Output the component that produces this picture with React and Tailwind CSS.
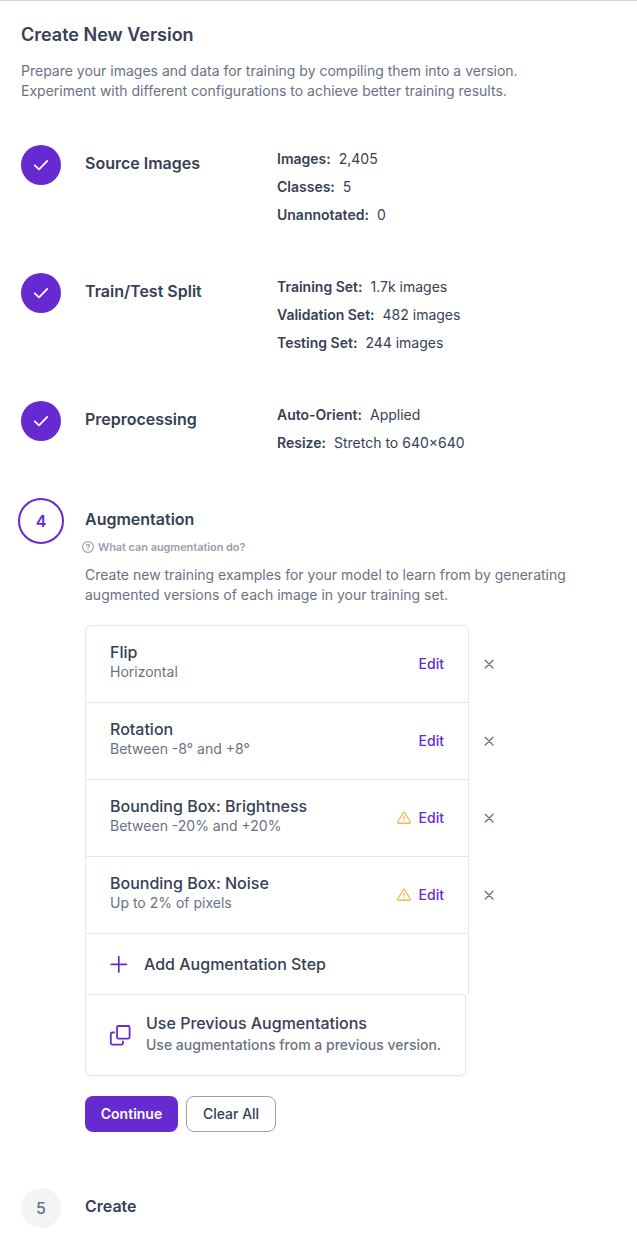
import clsx from 'clsx';

const doneSteps = [
  {
    title: 'Source Images',
    details: [
      ['Images:', '2,405'],
      ['Classes:', '5'],
      ['Unannotated:', '0'],
    ],
  },
  {
    title: 'Train/Test Split',
    details: [
      ['Training Set:', '1.7k images'],
      ['Validation Set:', '482 images'],
      ['Testing Set:', '244 images'],
    ],
  },
  {
    title: 'Preprocessing',
    details: [
      ['Auto-Orient:', 'Applied'],
      ['Resize:', 'Stretch to 640×640'],
    ],
  },
];

const augmentations = [
  { name: 'Flip', summary: 'Horizontal' },
  { name: 'Rotation', summary: 'Between -8° and +8°' },
  { name: 'Bounding Box: Brightness', summary: 'Between -20% and +20%', warning: true },
  { name: 'Bounding Box: Noise', summary: 'Up to 2% of pixels', warning: true },
];

function CheckIcon() {
  return (
    <svg className="w-4 h-4" viewBox="0 0 16 16" fill="none" stroke="currentColor" strokeWidth="1.8" strokeLinecap="round" strokeLinejoin="round">
      <path d="M1.8 8.3 6 12.3 14.3 3.9" />
    </svg>
  );
}

function WarningIcon() {
  return (
    <svg className="w-[14px] h-[14px]" viewBox="0 0 14 14" fill="none" stroke="currentColor" strokeWidth="1.4" strokeLinecap="round" strokeLinejoin="round">
      <path d="M6.3 1.5a.8.8 0 0 1 1.4 0l5.5 9.5a.8.8 0 0 1-.7 1.2h-11a.8.8 0 0 1-.7-1.2z" />
      <path d="M7 5v2.8" />
      <path d="M7 9.8v.1" />
    </svg>
  );
}

function CloseIcon() {
  return (
    <svg className="w-[10px] h-[10px]" viewBox="0 0 10 10" fill="none" stroke="currentColor" strokeWidth="1.3" strokeLinecap="round">
      <path d="M1.2 1.2l7.8 7.8M9 1.2l-7.8 7.8" />
    </svg>
  );
}

function QuestionIcon() {
  return (
    <svg className="w-3 h-3" viewBox="0 0 12 12" fill="none" stroke="currentColor" strokeWidth="1.2" strokeLinecap="round" strokeLinejoin="round">
      <circle cx="6" cy="6" r="5.4" />
      <path d="M4.5 4.6c0-.7.6-1.2 1.5-1.2s1.6.5 1.6 1.2c0 .9-1.6 1-1.6 2" />
      <path d="M6 8.5v.1" />
    </svg>
  );
}

function PlusIcon() {
  return (
    <svg className="w-[18px] h-[18px]" viewBox="0 0 18 18" fill="none" stroke="currentColor" strokeWidth="1.7" strokeLinecap="round">
      <path d="M8.8 1.7v15.2M1.2 9.3h15.2" />
    </svg>
  );
}

function CloneIcon() {
  return (
    <svg className="w-[22px] h-[22px]" viewBox="0 0 22 22" fill="none" stroke="currentColor" strokeWidth="1.8" strokeLinecap="round" strokeLinejoin="round">
      <rect x="8" y="2" width="12.6" height="12.6" rx="1.5" />
      <path d="M5 8.5H3.3A1.5 1.5 0 0 0 1.8 10v9.1a1.5 1.5 0 0 0 1.5 1.5h9.2a1.5 1.5 0 0 0 1.5-1.5v-1.7" />
    </svg>
  );
}

function DoneStep({ title, details }) {
  return (
    <section className="flex pb-11">
      <div className="w-10 h-10 mr-6 rounded-full bg-[#652bd1] text-white flex items-center justify-center">
        <CheckIcon />
      </div>
      <h3 className="w-48 pt-1.5 text-base font-semibold">{title}</h3>
      <dl className="text-sm leading-7">
        {details.map(([label, value]) => (
          <div key={label} className="flex gap-2">
            <dt className="font-semibold">{label}</dt>
            <dd>{value}</dd>
          </div>
        ))}
      </dl>
    </section>
  );
}

function AugmentationRow({ name, summary, warning, first }) {
  return (
    <li className="flex items-center">
      <div
        className={clsx(
          'flex items-center w-96 h-[77px] px-6 border-x border-t border-gray-200',
          first && 'rounded-t-md'
        )}
      >
        <div className="flex-1 pb-1">
          <p className="text-base leading-5 font-medium">{name}</p>
          <p className="text-sm text-gray-500">{summary}</p>
        </div>
        {warning && (
          <span className="mr-2 text-[#f0b95b]">
            <WarningIcon />
          </span>
        )}
        <button className="text-sm font-medium text-[#652bd1]">Edit</button>
      </div>
      <button className="ml-[15px] text-gray-500">
        <CloseIcon />
      </button>
    </li>
  );
}

export default function App() {
  return (
    <main className="h-[1236px] overflow-hidden bg-white border-t border-gray-300 px-[21px] pt-5 font-['Inter',sans-serif] text-gray-700">
      <h2 className="text-lg leading-7 font-semibold">Create New Version</h2>
      <p className="mt-3 mb-11 text-sm text-gray-500">
        Prepare your images and data for training by compiling them into a version.
        <br />
        Experiment with different configurations to achieve better training results.
      </p>

      {doneSteps.map((step) => (
        <DoneStep key={step.title} {...step} />
      ))}

      <section className="flex">
        <div className="w-[46px] h-[46px] -mt-[3px] -ml-[3px] mr-[21px] shrink-0 rounded-full border-2 border-[#652bd1] text-[#652bd1] font-semibold flex items-center justify-center">
          4
        </div>
        <div className="pt-1.5">
          <h3 className="text-base font-semibold">Augmentation</h3>
          <a className="flex items-center gap-1 h-4 mt-2 -ml-[3px] text-[11px] font-semibold tracking-[-0.07px] text-gray-400">
            <QuestionIcon />
            What can augmentation do?
          </a>
          <p className="mt-2.5 text-sm text-gray-500">
            Create new training examples for your model to learn from by generating
            <br />
            augmented versions of each image in your training set.
          </p>

          <ul className="mt-5">
            {augmentations.map((item, i) => (
              <AugmentationRow key={item.name} {...item} first={i === 0} />
            ))}
          </ul>
          <div className="w-96 rounded-b-md shadow-[0_1px_2px_rgba(0,0,0,0.05)]">
            <button className="flex items-center w-full h-[61px] px-6 border-x border-t border-gray-200 text-base font-medium">
              <span className="mr-4 text-[#652bd1]">
                <PlusIcon />
              </span>
              Add Augmentation Step
            </button>
            <button className="flex items-center w-[381px] h-[82px] pl-[23px] border border-gray-200 rounded-b-md text-left whitespace-nowrap">
              <span className="mr-[15px] text-[#652bd1]">
                <CloneIcon />
              </span>
              <span className="pb-1">
                <span className="block text-base font-medium">Use Previous Augmentations</span>
                <span className="block text-sm font-medium text-gray-500">Use augmentations from a previous version.</span>
              </span>
            </button>
          </div>

          <div className="flex gap-2 mt-5">
            <button className="h-9 w-[93px] rounded-lg bg-[#652bd1] text-sm font-semibold text-white">Continue</button>
            <button className="h-9 w-[90px] rounded-lg border border-gray-400 text-sm font-medium">Clear All</button>
          </div>
        </div>
      </section>

      <section className="flex mt-14">
        <div className="w-10 h-10 mr-6 rounded-full bg-gray-100 text-gray-500 font-medium flex items-center justify-center">5</div>
        <h3 className="pt-1.5 text-base font-semibold">Create</h3>
      </section>
    </main>
  );
}
